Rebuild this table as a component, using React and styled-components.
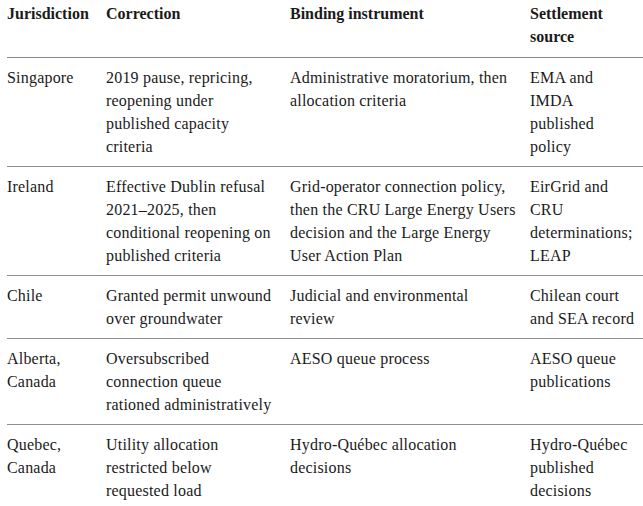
import React from 'react';
import styled, { createGlobalStyle } from 'styled-components';

const GlobalStyle = createGlobalStyle`
    html, body {
        margin: 0;
        padding: 0;
        background: #ffffff;
    }
    body {
        font-family: "Liberation Serif", "Times New Roman", serif;
        color: #1a1a1a;
    }
`;

const Wrapper = styled.div`
    padding-left: 7px;
    overflow: hidden;
`;

const Table = styled.table`
    width: 636px;
    border-collapse: collapse;
    table-layout: fixed;
    font-size: 16px;
    line-height: 23px;
`;

const HeadCell = styled.th`
    text-align: left;
    vertical-align: top;
    font-weight: 700;
    padding: 2px 0 9px 0;
    border-bottom: 1px solid #8a8a8a;
    white-space: nowrap;
`;

const Row = styled.tr`
    border-bottom: 1px solid #8f8f8f;
`;

const Cell = styled.td`
    vertical-align: top;
    padding: 8px 0;
    white-space: nowrap;
    letter-spacing: 0.2px;
`;

const columns = [
    { title: ['Jurisdiction'], width: 99 },
    { title: ['Correction'], width: 184 },
    { title: ['Binding instrument'], width: 240 },
    { title: ['Settlement', 'source'], width: 113 },
];

// each cell is kept as the lines it wraps to in the original
const rows = [
    [
        ['Singapore'],
        ['2019 pause, repricing,', 'reopening under', 'published capacity', 'criteria'],
        ['Administrative moratorium, then', 'allocation criteria'],
        ['EMA and', 'IMDA', 'published', 'policy'],
    ],
    [
        ['Ireland'],
        ['Effective Dublin refusal', '2021–2025, then', 'conditional reopening on', 'published criteria'],
        ['Grid-operator connection policy,', 'then the CRU Large Energy Users', 'decision and the Large Energy', 'User Action Plan'],
        ['EirGrid and', 'CRU', 'determinations;', 'LEAP'],
    ],
    [
        ['Chile'],
        ['Granted permit unwound', 'over groundwater'],
        ['Judicial and environmental', 'review'],
        ['Chilean court', 'and SEA record'],
    ],
    [
        ['Alberta,', 'Canada'],
        ['Oversubscribed', 'connection queue', 'rationed administratively'],
        ['AESO queue process'],
        ['AESO queue', 'publications'],
    ],
    [
        ['Quebec,', 'Canada'],
        ['Utility allocation', 'restricted below', 'requested load'],
        ['Hydro-Québec allocation', 'decisions'],
        ['Hydro-Québec', 'published', 'decisions'],
    ],
];

function Lines({ lines }) {
    return lines.map((line, i) => (
        <React.Fragment key={i}>
            {i > 0 && <br />}
            {line}
        </React.Fragment>
    ));
}

export default function App() {
    return (
        <Wrapper>
            <GlobalStyle />
            <Table>
                <colgroup>
                    {columns.map((c, i) => (
                        <col key={i} style={{ width: c.width }} />
                    ))}
                </colgroup>
                <thead>
                    <tr>
                        {columns.map((c, i) => (
                            <HeadCell key={i}>
                                <Lines lines={c.title} />
                            </HeadCell>
                        ))}
                    </tr>
                </thead>
                <tbody>
                    {rows.map((row, r) => (
                        <Row key={r}>
                            {row.map((cell, i) => (
                                <Cell key={i}>
                                    <Lines lines={cell} />
                                </Cell>
                            ))}
                        </Row>
                    ))}
                </tbody>
            </Table>
        </Wrapper>
    );
}
